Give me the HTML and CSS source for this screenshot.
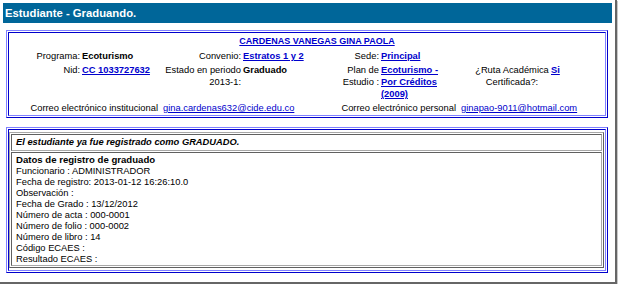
FILE: index.html
```html
<!DOCTYPE html>
<html lang="es">
<head>
    <meta charset="UTF-8">
    <meta name="viewport" content="width=device-width, initial-scale=1.0">
    <title>Estudiante - Graduando</title>
    <link rel="stylesheet" href="styles.css">
</head>
<body>
    <div class="frame">
        <div class="titlebar">Estudiante - Graduando.</div>

        <div class="bluebox info">
            <div class="bluecell">
                <div class="student-grid">
                    <div class="name"><a href="#">CARDENAS VANEGAS GINA PAOLA</a></div>

                    <div class="lbl">Programa:</div>
                    <div class="val"><b>Ecoturismo</b></div>
                    <div class="lbl">Convenio:</div>
                    <div class="val"><a href="#"><b>Estratos 1 y 2</b></a></div>
                    <div class="lbl">Sede:</div>
                    <div class="val"><a href="#"><b>Principal</b></a></div>
                    <div></div>
                    <div></div>

                    <div class="lbl">Nid:</div>
                    <div class="val"><a href="#"><b>CC 1033727632</b></a></div>
                    <div class="lbl">Estado en periodo 2013-1:</div>
                    <div class="val"><b>Graduado</b></div>
                    <div class="lbl">Plan de Estudio :</div>
                    <div class="val"><a href="#" class="plan"><b>Ecoturismo - Por Créditos (2009)</b></a></div>
                    <div class="lbl ruta">¿Ruta Académica Certificada?:</div>
                    <div class="val"><a href="#"><b>Si</b></a></div>

                    <div class="lbl wide">Correo electrónico institucional</div>
                    <div class="val wide"><a href="#">gina.cardenas632@cide.edu.co</a></div>
                    <div class="lbl wide">Correo electrónico personal</div>
                    <div class="val wide"><a href="#">ginapao-9011@hotmail.com</a></div>
                </div>
            </div>
        </div>

        <div class="bluebox result">
            <div class="bluecell">
                <div class="graytable">
                    <div class="graycell msg">El estudiante ya fue registrado como GRADUADO.</div>
                    <div class="graycell data">
                        <div class="data-title">Datos de registro de graduado</div>
                        <div>Funcionario : ADMINISTRADOR</div>
                        <div>Fecha de registro: 2013-01-12 16:26:10.0</div>
                        <div>Observación :</div>
                        <div>Fecha de Grado : 13/12/2012</div>
                        <div>Número de acta : 000-0001</div>
                        <div>Número de folio : 000-0002</div>
                        <div>Número de libro : 14</div>
                        <div>Código ECAES :</div>
                        <div>Resultado ECAES :</div>
                    </div>
                </div>
            </div>
        </div>
    </div>
</body>
</html>
```

FILE: styles.css
```css
* {
    margin: 0;
    padding: 0;
    box-sizing: border-box;
}

body {
    font-family: "Liberation Sans", Arial, sans-serif;
    font-size: 9.33px;
    color: #000;
    background-color: #fff;
}

a {
    color: #0000cc;
    text-decoration: underline;
}

.frame {
    width: 617px;
    padding: 3px 3px 9px 3px;
    border-right: 2px solid #666;
    border-bottom: 2px solid #666;
    box-shadow: 1px 1px 0 #c8c8c8;
}

.titlebar {
    height: 20px;
    line-height: 20px;
    padding-left: 2px;
    background-color: #006699;
    color: white;
    font-size: 11.3px;
    font-weight: bold;
}

/* blue double border, like an old table with bordercolor */
.bluebox {
    margin: 7px 4px 0 3px;
    padding: 1px;
    border: 1px solid;
    border-color: #8080ff #0000cc #0000cc #8080ff;
}

.bluecell {
    height: 100%;
    border: 1px solid;
    border-color: #0000cc #8080ff #8080ff #0000cc;
}

.info {
    height: 88px;
}

.result {
    height: 146px;
    margin-top: 9px;
}

.student-grid {
    display: grid;
    grid-template-columns: 72px 81px 80px 88px 50px 80px 90px 1fr;
    row-gap: 2px;
    padding-top: 2px;
    line-height: 12px;
}

.name {
    grid-column: 1 / -1;
    margin-bottom: 1px;
    text-align: center;
    padding-left: 20px;
    font-size: 9px;
    font-weight: bold;
}

.lbl {
    text-align: right;
    padding-right: 1px;
}

.val {
    padding-left: 1px;
}

.plan {
    display: inline-block;
    width: 64px;
}

.ruta {
    text-align: center;
    padding-left: 14px;
    padding-right: 0;
}

.wide {
    grid-column: span 2;
}

.lbl.wide {
    padding-right: 4px;
}

.result .bluecell {
    padding: 2px 1px 2px 0;
}

.graytable {
    height: 100%;
    display: flex;
    flex-direction: column;
    gap: 1px;
    padding: 1px;
    border: 1px solid;
    border-color: #a8a8a8 #606060 #606060 #a8a8a8;
}

.graycell {
    border: 1px solid;
    border-color: #606060 #a8a8a8 #a8a8a8 #606060;
    padding-left: 4px;
}

.msg {
    height: 17px;
    line-height: 15px;
    font-style: italic;
    font-weight: bold;
}

.data {
    flex: 1;
    padding-top: 1px;
    line-height: 11px;
}

.data-title {
    font-size: 9.6px;
    font-weight: bold;
    line-height: 12px;
}
```
